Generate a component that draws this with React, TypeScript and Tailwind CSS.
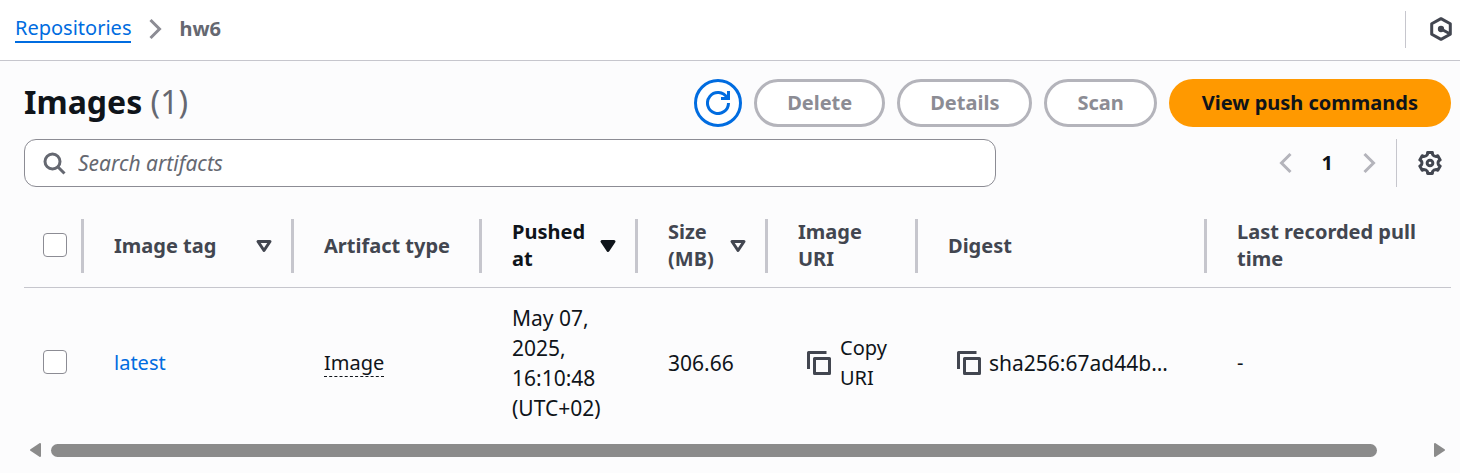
import type { ReactNode } from "react";

type IconProps = { className?: string; children: ReactNode };

function Icon({ className = "", children }: IconProps) {
  return (
    <svg
      viewBox="0 0 16 16"
      aria-hidden="true"
      className={`size-6 shrink-0 fill-none stroke-current stroke-2 ${className}`}
    >
      {children}
    </svg>
  );
}

const ChevronRight = () => (
  <Icon>
    <path d="m5 2 6 6-6 6" />
  </Icon>
);

const ChevronLeft = () => (
  <Icon>
    <path d="M11 2 5 8l6 6" />
  </Icon>
);

const CopyIcon = () => (
  <Icon className="text-[#424650]">
    <path d="M1 12V1h12" strokeLinejoin="round" />
    <path d="M5 5h10v10H5z" strokeLinejoin="round" />
  </Icon>
);

function SortIcon({ active }: { active?: boolean }) {
  return (
    <Icon>
      <path d="M4 5h8l-4 6-4-6z" strokeLinejoin="round" className={active ? "fill-current" : ""} />
    </Icon>
  );
}

function polar(degrees: number, radius: number) {
  const angle = ((degrees - 90) * Math.PI) / 180;
  return `${(8 + radius * Math.cos(angle)).toFixed(2)} ${(8 + radius * Math.sin(angle)).toFixed(2)}`;
}

// Six rounded teeth joined by shallow curved valleys.
const gearPath =
  [0, 60, 120, 180, 240, 300]
    .map((tooth, i) =>
      [
        `${i === 0 ? "M" : "L"}${polar(tooth - 13, 7.1)}`,
        `L${polar(tooth + 13, 7.1)}`,
        `L${polar(tooth + 17, 5.9)}`,
        `Q${polar(tooth + 30, 5)} ${polar(tooth + 43, 5.9)}`,
      ].join(""),
    )
    .join("") + "z";

const columns = [
  { label: "Image tag", width: "w-[210px]", sort: "idle" },
  { label: "Artifact type", width: "w-[188px]" },
  { label: "Pushed at", width: "w-[156px]", sort: "active" },
  { label: "Size (MB)", width: "w-[130px]", sort: "idle" },
  { label: "Image URI", width: "w-[150px]" },
  { label: "Digest", width: "w-[289px]" },
  { label: "Last recorded pull time", width: "w-auto" },
];

function Checkbox({ label }: { label: string }) {
  return (
    <input
      type="checkbox"
      aria-label={label}
      className="block size-6 appearance-none rounded border border-[#8c8c94] bg-white checked:bg-[#006ce0]"
    />
  );
}

function DisabledButton({ children }: { children: ReactNode }) {
  return (
    <button
      type="button"
      disabled
      className="h-12 rounded-full border-3 border-[#b4b4bb] bg-white px-[30px] font-bold text-[#8c8c94]"
    >
      {children}
    </button>
  );
}

export default function App() {
  return (
    <div className="min-h-screen bg-[#fcfcfd] font-['Noto_Sans',sans-serif] text-xl leading-[30px] text-[#0f141a]">
      <header className="flex items-center justify-between border-b border-[#c6c6cd] bg-white pt-[9px] pr-[7px] pb-[11px] pl-[15px]">
        <nav aria-label="Breadcrumbs" className="flex h-10 items-center gap-3">
          <a href="#" className="border-b-2 border-[#006ce0] leading-[26px] text-[#006ce0]">
            Repositories
          </a>
          <span className="text-[#8c8c94]">
            <ChevronRight />
          </span>
          <span className="font-bold text-[#656871]">hw6</span>
        </nav>
        <div className="flex h-[37px] items-center border-l border-[#c6c6cd] pl-[23px]">
          <button type="button" aria-label="Info panel" className="text-[#424650]">
            <Icon>
              <path d="M8 1.1 14.2 4.5v7L8 14.9 1.8 11.5v-7z" strokeLinejoin="round" />
              <circle cx="8" cy="8" r="1.1" className="fill-current" />
              <path d="m8 8 5.6 3" />
            </Icon>
          </button>
        </div>
      </header>

      <main className="pt-[18px] pr-[9px] pl-6">
        <div className="flex items-center justify-between">
          <h1 className="pb-0.5 text-[32px] leading-10 font-bold">
            Images <span className="font-normal text-[#656871]">(1)</span>
          </h1>
          <div className="flex gap-3">
            <button
              type="button"
              aria-label="Refresh"
              className="flex size-12 items-center justify-center rounded-full border-3 border-[#006ce0] bg-white text-[#006ce0]"
            >
              <Icon>
                <path d="M10 5h5V0" />
                <path d="M15 8a7 7 0 1 1-1-3.6" />
              </Icon>
            </button>
            <DisabledButton>Delete</DisabledButton>
            <DisabledButton>Details</DisabledButton>
            <DisabledButton>Scan</DisabledButton>
            <button type="button" className="h-12 rounded-full bg-[#ff9900] px-[33px] font-bold">
              View push commands
            </button>
          </div>
        </div>

        <div className="mt-3 flex items-center justify-between">
          <label className="flex h-12 w-[68.1%] items-center gap-3 rounded-xl border border-[#8c8c94] bg-white px-[17px] text-[#656871]">
            <Icon>
              <circle cx="7" cy="7" r="5" />
              <path d="m15 15-4.5-4.5" />
            </Icon>
            <input
              type="search"
              aria-label="Search artifacts"
              placeholder="Search artifacts"
              className="min-w-0 flex-1 text-[21px] outline-none placeholder:text-[#656871] placeholder:italic"
            />
          </label>
          <div className="flex items-center">
            <nav aria-label="Pagination" className="flex items-center gap-6 pr-[15px] text-[#b4b4bb]">
              <button type="button" disabled aria-label="Previous page">
                <ChevronLeft />
              </button>
              <button type="button" aria-current="page" className="font-bold text-[#0f141a]">
                1
              </button>
              <button type="button" disabled aria-label="Next page">
                <ChevronRight />
              </button>
            </nav>
            <div className="flex h-12 items-center border-l border-[#c6c6cd] pr-[9px] pl-[21px]">
              <button type="button" aria-label="Preferences" className="text-[#424650]">
                <Icon>
                  <path d={gearPath} strokeLinejoin="round" />
                  <circle cx="8" cy="8" r="1.9" />
                </Icon>
              </button>
            </div>
          </div>
        </div>

        <table className="mt-[18px] w-full table-fixed border-collapse text-left">
          <thead>
            <tr className="border-b border-[#c6c6cd] text-[#424650]">
              <th scope="col" className="w-[60px] py-[14px]">
                <div className="flex h-[54px] items-center border-r-3 border-[#c6c6cd] pb-0.5 pl-[19px]">
                  <Checkbox label="Select all images" />
                </div>
              </th>
              {columns.map(({ label, width, sort }) => (
                <th key={label} scope="col" className={`${width} group py-[14px] leading-[27px] font-bold`}>
                  <div className="flex h-[54px] items-center justify-between border-r-3 border-[#c6c6cd] pr-[15px] pl-[30px] group-last:border-r-0">
                    <span className={sort === "active" ? "pb-0.5 text-[#0f141a]" : "pb-0.5"}>{label}</span>
                    {sort && (
                      <button
                        type="button"
                        aria-label={`Sort by ${label}`}
                        className={sort === "active" ? "text-[#0f141a]" : ""}
                      >
                        <SortIcon active={sort === "active"} />
                      </button>
                    )}
                  </div>
                </th>
              ))}
            </tr>
          </thead>
          <tbody>
            <tr>
              <td className="pt-[14px] pb-4 pl-[19px]">
                <Checkbox label="Select latest" />
              </td>
              <td className="pl-[30px]">
                <a href="#" className="text-[#006ce0]">
                  latest
                </a>
              </td>
              <td className="pl-[30px]">
                <span className="border-b border-dashed border-[#0f141a]">Image</span>
              </td>
              <td className="pt-[15px] pr-6 pb-[14px] pl-[30px] text-[21px]">May 07, 2025, 16:10:48 (UTC+02)</td>
              <td className="pl-[30px] text-[21px]">306.66</td>
              <td className="pl-[39px]">
                <button type="button" className="flex items-center gap-[9px] pr-6 text-left">
                  <CopyIcon />
                  Copy URI
                </button>
              </td>
              <td className="pl-[39px]">
                <div className="flex items-center gap-2 text-[21px]">
                  <button type="button" aria-label="Copy digest">
                    <CopyIcon />
                  </button>
                  sha256:67ad44b…
                </div>
              </td>
              <td className="pl-[30px]">-</td>
            </tr>
          </tbody>
        </table>

        <div className="mt-[6px] flex items-center gap-[10px] px-[6px] text-[#8b8b8b]">
          <svg viewBox="0 0 11 14" aria-hidden="true" className="h-[14px] w-[11px] fill-current stroke-current stroke-2">
            <path d="M1 7 10 1v12z" strokeLinejoin="round" />
          </svg>
          <div className="flex-1">
            <div className="h-[13px] w-[96.6%] rounded-full bg-[#8b8b8b]" />
          </div>
          <svg viewBox="0 0 11 14" aria-hidden="true" className="h-[14px] w-[11px] fill-current stroke-current stroke-2">
            <path d="M10 7 1 1v12z" strokeLinejoin="round" />
          </svg>
        </div>
      </main>
    </div>
  );
}
